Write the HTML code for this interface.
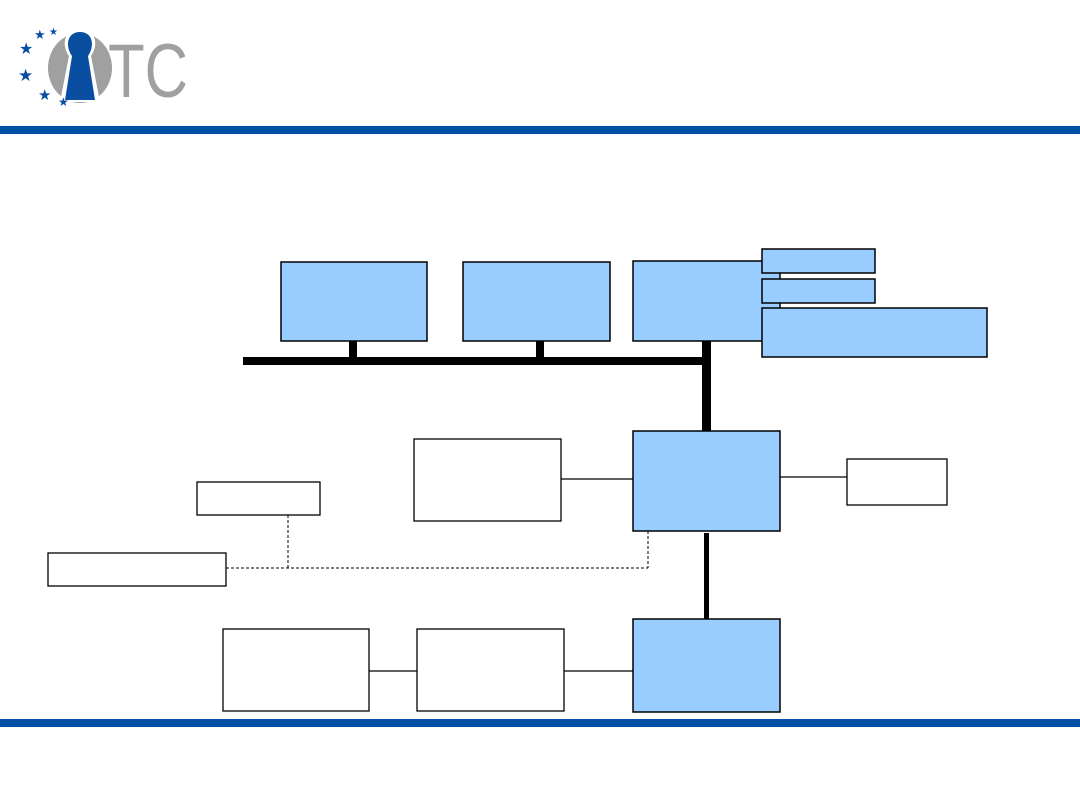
<!DOCTYPE html>
<html><head><style>body{margin:0;background:#fff;}svg{display:block}</style></head><body>
<svg width="1080" height="810" viewBox="0 0 1080 810" xmlns="http://www.w3.org/2000/svg">
<rect x="0" y="0" width="1080" height="810" fill="#fff"/>
<!-- logo -->
<ellipse cx="80" cy="68" rx="32" ry="35" fill="#a0a0a0"/>
<path d="M80 29 C64 29 61 45 69 56 L60 102 L100 102 L91 56 C99 45 96 29 80 29 Z" fill="#fff"/>
<path d="M80 32 C67 32 65 46 72 56 L65 100 L95 100 L88 56 C95 46 93 32 80 32 Z" fill="#0a4ea2"/>
<text x="108" y="97" font-family="Liberation Sans, sans-serif" font-size="76" fill="#a0a0a0" textLength="80" lengthAdjust="spacingAndGlyphs">TC</text>
<g fill="#0a4ea2" font-family="DejaVu Sans, sans-serif">
<text x="34" y="39" font-size="13">★</text>
<text x="49" y="35" font-size="10">★</text>
<text x="19" y="54" font-size="16">★</text>
<text x="18" y="81" font-size="17">★</text>
<text x="38" y="100" font-size="15">★</text>
<text x="58" y="106" font-size="12">★</text>
</g>
<!-- bars -->
<rect x="0" y="126" width="1080" height="8" fill="#0050a4"/>
<rect x="0" y="719" width="1080" height="8" fill="#0050a4"/>
<!-- bus -->
<g fill="#000">
<rect x="243" y="357" width="468" height="8"/>
<rect x="702" y="341" width="9" height="91"/>
<rect x="349" y="341" width="8" height="18"/>
<rect x="536" y="341" width="8" height="18"/>
<rect x="704" y="533" width="5" height="90"/>
</g>
<g stroke="#000" stroke-width="1.3">
<line x1="561" y1="479" x2="633" y2="479"/>
<line x1="780" y1="477" x2="847" y2="477"/>
<line x1="369" y1="671" x2="417" y2="671"/>
<line x1="564" y1="671" x2="633" y2="671"/>
</g>
<g stroke="#000" stroke-width="1" stroke-dasharray="3,2" fill="none">
<line x1="288" y1="515" x2="288" y2="568"/>
<line x1="226" y1="568" x2="648" y2="568"/>
<line x1="648" y1="531" x2="648" y2="568"/>
</g>
<g stroke="#000" stroke-width="1.5" fill="#99ccff">
<rect x="281" y="262" width="146" height="79"/>
<rect x="463" y="262" width="147" height="79"/>
<rect x="633" y="261" width="147" height="80"/>
<rect x="762" y="249" width="113" height="24"/>
<rect x="762" y="279" width="113" height="24"/>
<rect x="762" y="308" width="225" height="49"/>
<rect x="633" y="431" width="147" height="100"/>
<rect x="633" y="619" width="147" height="93"/>
</g>
<g stroke="#000" stroke-width="1.3" fill="#fff">
<rect x="414" y="439" width="147" height="82"/>
<rect x="847" y="459" width="100" height="46"/>
<rect x="197" y="482" width="123" height="33"/>
<rect x="48" y="553" width="178" height="33"/>
<rect x="223" y="629" width="146" height="82"/>
<rect x="417" y="629" width="147" height="82"/>
</g>
</svg>
</body></html>
